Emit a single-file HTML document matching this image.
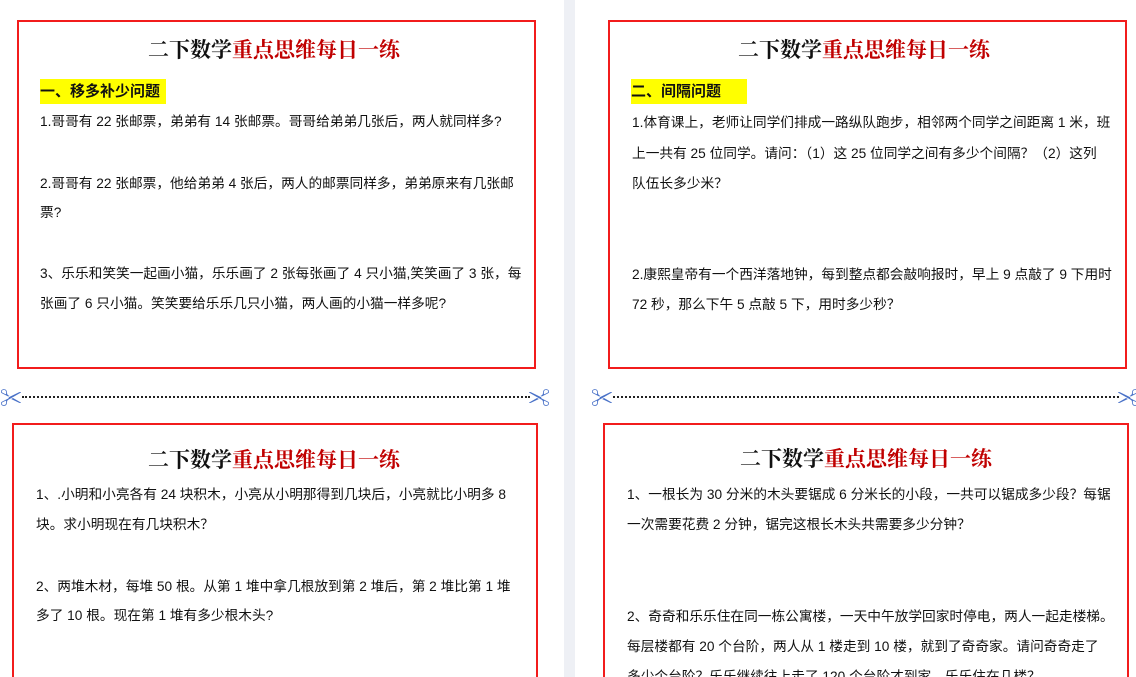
<!DOCTYPE html>
<html style="overflow:hidden"><head><meta charset="utf-8"><style>
html,body{margin:0;width:1136px;height:677px;overflow:hidden}
body{background:#fff;position:relative;font-family:"Liberation Sans","Noto Sans CJK SC",sans-serif;color:#111}
.strip{position:absolute;left:564px;top:0;width:11px;height:677px;background:#eef0f5}
.box{position:absolute;border:2px solid #f21c1c;box-sizing:border-box}
.t{position:absolute;font-family:"Liberation Serif","Noto Serif CJK SC",serif;font-weight:bold;font-size:21px;white-space:nowrap;line-height:24px}
.t span{color:#c00000}
.l{position:absolute;font-size:13.7px;white-space:nowrap;line-height:18px}
.h{position:absolute;font-size:15px;font-weight:bold;background:#ffff00;line-height:25px}
.dot{position:absolute;height:0;border-top:2px dotted #222}
.sc{position:absolute;color:#4a72c8;font-size:22px;line-height:20px}
</style></head><body>
<div class="strip"></div>
<div class="box" style="left:17px;top:20px;width:519px;height:349px"></div>
<div class="box" style="left:608px;top:20px;width:519px;height:349px"></div>
<div class="box" style="left:12px;top:423px;width:526px;height:254px;border-bottom:none"></div>
<div class="box" style="left:603px;top:423px;width:526px;height:254px;border-bottom:none"></div>

<div class="t" style="left:148px;top:38px">二下数学<span>重点思维每日一练</span></div>
<div class="h" style="left:40px;top:79px;width:126px">一、移多补少问题</div>
<div class="l" style="left:40px;top:113px">1.哥哥有 22 张邮票，弟弟有 14 张邮票。哥哥给弟弟几张后，两人就同样多?</div>
<div class="l" style="left:40px;top:175px">2.哥哥有 22 张邮票，他给弟弟 4 张后，两人的邮票同样多，弟弟原来有几张邮</div>
<div class="l" style="left:40px;top:204px">票?</div>
<div class="l" style="left:40px;top:265px">3、乐乐和笑笑一起画小猫，乐乐画了 2 张每张画了 4 只小猫,笑笑画了 3 张，每</div>
<div class="l" style="left:40px;top:295px">张画了 6 只小猫。笑笑要给乐乐几只小猫，两人画的小猫一样多呢?</div>

<div class="t" style="left:738px;top:38px">二下数学<span>重点思维每日一练</span></div>
<div class="h" style="left:631px;top:79px;width:116px">二、间隔问题</div>
<div class="l" style="left:632px;top:114px">1.体育课上，老师让同学们排成一路纵队跑步，相邻两个同学之间距离 1 米，班</div>
<div class="l" style="left:632px;top:145px">上一共有 25 位同学。请问：（1）这 25 位同学之间有多少个间隔？（2）这列</div>
<div class="l" style="left:632px;top:175px">队伍长多少米？</div>
<div class="l" style="left:632px;top:266px">2.康熙皇帝有一个西洋落地钟，每到整点都会敲响报时，早上 9 点敲了 9 下用时</div>
<div class="l" style="left:632px;top:296px">72 秒，那么下午 5 点敲 5 下，用时多少秒？</div>

<div class="sc" style="left:0px;top:389px">✂</div>
<div class="dot" style="left:22px;top:396px;width:508px"></div>
<div class="sc" style="left:528px;top:389px;transform:scaleX(-1)">✂</div>
<div class="sc" style="left:591px;top:389px">✂</div>
<div class="dot" style="left:613px;top:396px;width:506px"></div>
<div class="sc" style="left:1117px;top:389px;transform:scaleX(-1)">✂</div>

<div class="t" style="left:148px;top:448px">二下数学<span>重点思维每日一练</span></div>
<div class="l" style="left:36px;top:486px">1、.小明和小亮各有 24 块积木，小亮从小明那得到几块后，小亮就比小明多 8</div>
<div class="l" style="left:36px;top:516px">块。求小明现在有几块积木？</div>
<div class="l" style="left:36px;top:578px">2、两堆木材，每堆 50 根。从第 1 堆中拿几根放到第 2 堆后，第 2 堆比第 1 堆</div>
<div class="l" style="left:36px;top:607px">多了 10 根。现在第 1 堆有多少根木头?</div>

<div class="t" style="left:740px;top:447px">二下数学<span>重点思维每日一练</span></div>
<div class="l" style="left:627px;top:486px">1、一根长为 30 分米的木头要锯成 6 分米长的小段，一共可以锯成多少段？每锯</div>
<div class="l" style="left:627px;top:516px">一次需要花费 2 分钟，锯完这根长木头共需要多少分钟？</div>
<div class="l" style="left:627px;top:608px">2、奇奇和乐乐住在同一栋公寓楼，一天中午放学回家时停电，两人一起走楼梯。</div>
<div class="l" style="left:627px;top:638px">每层楼都有 20 个台阶，两人从 1 楼走到 10 楼，就到了奇奇家。请问奇奇走了</div>
<div class="l" style="left:627px;top:668px">多少个台阶？乐乐继续往上走了 120 个台阶才到家，乐乐住在几楼？</div>
</body></html>
